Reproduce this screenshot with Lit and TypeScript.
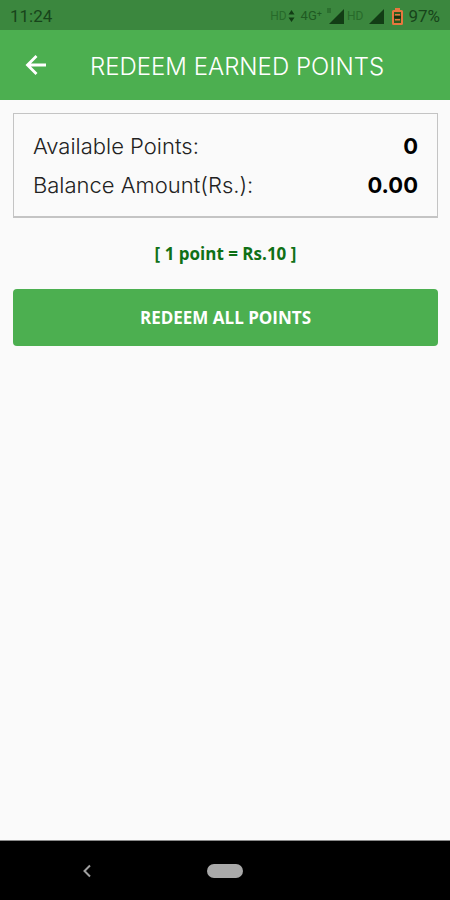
import { LitElement, html, css } from "lit";
import { customElement, property } from "lit/decorators.js";

@customElement("status-bar")
class StatusBar extends LitElement {
  static styles = css`
    :host {
      display: flex;
      align-items: center;
      justify-content: space-between;
      height: 30px;
      padding: 2px 10px 0;
      box-sizing: border-box;
      background: #3b873e;
      color: #17441a;
      font-family: Roboto, sans-serif;
      font-size: 17px;
      line-height: 20px;
    }
    .side {
      display: flex;
      align-items: center;
    }
    .small {
      font-size: 12px;
      color: #276a2a;
    }
    .net {
      font-size: 13px;
      color: #1f5a22;
      margin-left: 6px;
    }
    svg {
      display: block;
    }
    .arrows {
      margin-left: 1px;
    }
    .signal {
      margin: 0 3px 0 4px;
    }
    .signal.second {
      margin: 0 8px 0 6px;
    }
    .battery {
      margin-right: 5px;
    }
  `;

  render() {
    return html`
      <span>11:24</span>
      <div class="side">
        <span class="small">HD</span>
        <svg class="arrows" width="7" height="14" viewBox="0 0 7 14" fill="#123d15">
          <path d="M3.5 1 6.5 5.5H.5zM3.5 13 .5 8.5h6z" />
        </svg>
        <span class="net">4G⁺</span>
        <svg class="signal" width="18" height="16" viewBox="0 0 18 16">
          <path d="M18 1v15H3z" fill="#123d15" />
          <path d="M1 0h4v5H1z" fill="#2c702f" />
        </svg>
        <span class="small">HD</span>
        <svg class="signal second" width="15" height="16" viewBox="0 0 15 16">
          <path d="M15 1v15H0z" fill="#123d15" />
        </svg>
        <svg class="battery" width="11" height="17" viewBox="0 0 11 17">
          <path d="M3 0h5v2h1.500q1.500 0 1.500 1.500v12q0 1.500-1.500 1.500h-8Q0 17 0 15.500v-12Q0 2 1.500 2H3z" fill="#e8763f" />
          <path d="M2 4h7v11H2z" fill="#2c5a1e" />
          <path d="M3 6h5v1.500H3zM3 11h5v1.500H3z" fill="#e8763f" />
          <path d="M2 8h7v2.500H2z" fill="#1a3010" />
        </svg>
        <span>97%</span>
      </div>
    `;
  }
}

@customElement("nav-bar")
class NavBar extends LitElement {
  static styles = css`
    :host {
      display: grid;
      grid-template-columns: 1fr auto 1fr;
      align-items: center;
      height: 60px;
      background: #000;
      border-top: 1px solid #8a8a8a;
      box-sizing: border-box;
    }
    button {
      display: block;
      padding: 8px;
      border: 0;
      background: none;
    }
    .back {
      justify-self: center;
      margin-right: 26px;
    }
    svg {
      display: block;
    }
    .pill {
      display: block;
      width: 36px;
      height: 14px;
      border-radius: 7px;
      background: #a9a9a9;
    }
  `;

  render() {
    return html`
      <button class="back" aria-label="Back">
        <svg width="10" height="14" viewBox="0 0 10 14" fill="none" stroke="#a0a0a0" stroke-width="2">
          <path d="M8 1.500 2.500 7 8 12.500" />
        </svg>
      </button>
      <button aria-label="Home"><span class="pill"></span></button>
    `;
  }
}

@customElement("app-root")
class AppRoot extends LitElement {
  @property({ type: Number }) points = 0;
  @property({ type: Number }) rate = 10;

  static styles = css`
    :host {
      display: flex;
      flex-direction: column;
      min-height: 100vh;
      background: #fafafa;
      font-family: Inter, "Open Sans", sans-serif;
    }
    header {
      display: flex;
      align-items: center;
      height: 70px;
      background: #4caf50;
      color: #fff;
    }
    .back {
      padding: 8px 12px;
      margin: 0 30px 0 12px;
      border: 0;
      background: none;
    }
    .back svg {
      display: block;
    }
    h1 {
      margin: 0;
      padding-top: 4px;
      font-size: 24px;
      line-height: 32px;
      font-weight: 300;
      white-space: nowrap;
    }
    main {
      flex: 1;
      padding: 13px 12px 13px 13px;
    }
    .card {
      margin: 0;
      padding: 12px 19px;
      border: 1px solid #c4c4c4;
      border-bottom: 2px solid #c4c4c4;
    }
    .row {
      display: flex;
      justify-content: space-between;
      align-items: center;
      height: 39px;
      font-size: 22px;
      color: #222;
    }
    dt {
      font-weight: 300;
    }
    dd {
      margin: 0;
      font-weight: 700;
      color: #000;
    }
    .rate {
      margin: 24px 0 23px;
      text-align: center;
      font-family: "Open Sans", sans-serif;
      font-size: 17px;
      line-height: 24px;
      font-weight: 700;
      color: #0f7016;
    }
    .redeem {
      display: block;
      width: 100%;
      height: 57px;
      border: 0;
      border-radius: 4px;
      background: #4caf50;
      color: #fff;
      font: 700 17px/24px "Open Sans", sans-serif;
    }
  `;

  render() {
    return html`
      <status-bar></status-bar>
      <header>
        <button class="back" aria-label="Back">
          <svg width="24" height="22" viewBox="0 0 24 22" fill="none" stroke="#fff" stroke-width="2.800">
            <path d="M22 11H4M12.500 2 3.500 11l9 9" />
          </svg>
        </button>
        <h1>REDEEM EARNED POINTS</h1>
      </header>
      <main>
        <dl class="card">
          <div class="row">
            <dt>Available Points:</dt>
            <dd>${this.points}</dd>
          </div>
          <div class="row">
            <dt>Balance Amount(Rs.):</dt>
            <dd>${(this.points * this.rate).toFixed(2)}</dd>
          </div>
        </dl>
        <p class="rate">[ 1 point = Rs.${this.rate} ]</p>
        <button class="redeem">REDEEM ALL POINTS</button>
      </main>
      <nav-bar></nav-bar>
    `;
  }
}
